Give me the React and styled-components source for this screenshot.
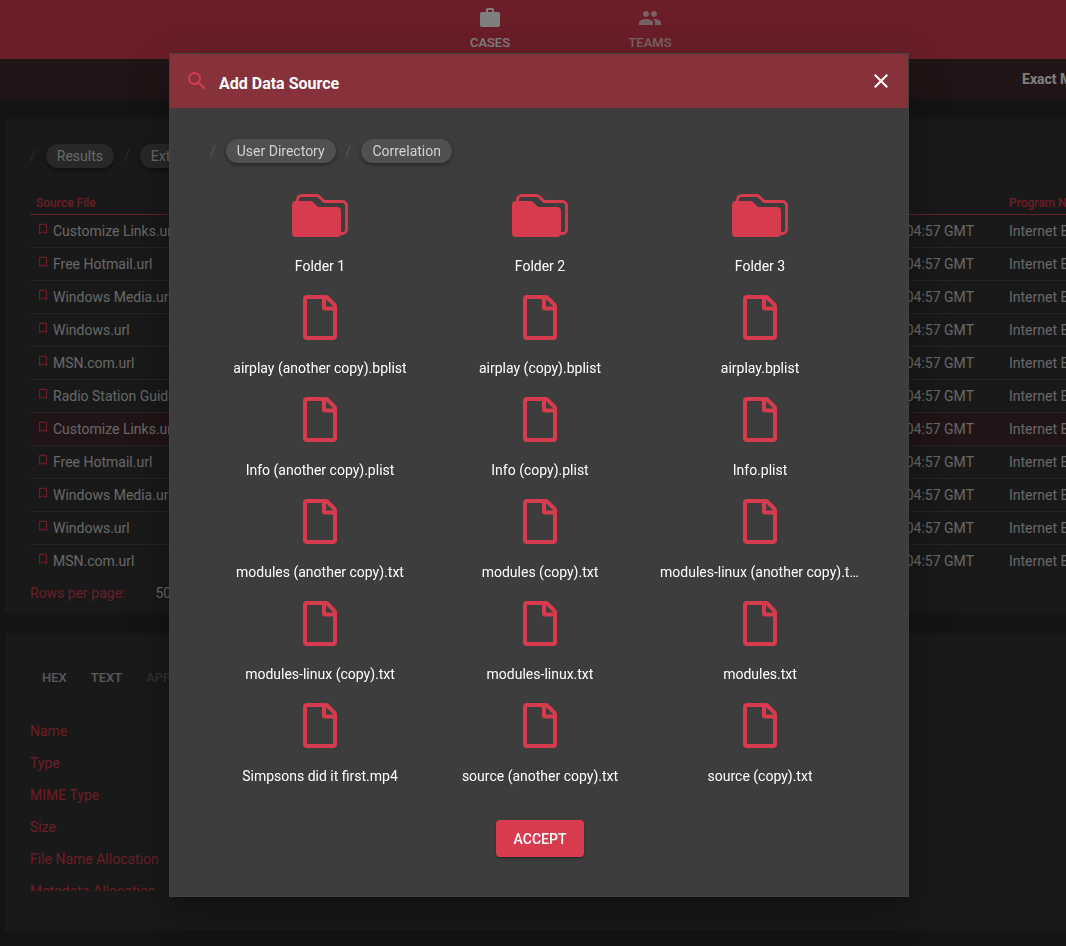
import React from 'react';
import styled, { createGlobalStyle } from 'styled-components';
import { MdWork, MdPeople, MdSearch, MdClose, MdBookmarkBorder } from 'react-icons/md';

const accent = '#d63c4e';

const GlobalStyle = createGlobalStyle`
  *, *::before, *::after { box-sizing: border-box; }
  body {
    margin: 0;
    background: #282828;
    color: #fff;
    font-family: Roboto, "Liberation Sans", sans-serif;
    font-size: 14px;
    line-height: 20px;
    overflow-x: hidden;
  }
  button { font: inherit; color: inherit; border: 0; background: none; padding: 0; cursor: pointer; }
  a { color: inherit; text-decoration: none; }
`;

const Page = styled.div`
  min-height: 100vh;
  overflow: hidden;
  padding-bottom: 15px;
`;

const NavBar = styled.nav`
  height: 59px;
  padding-left: 74px;
  display: flex;
  justify-content: center;
  background: ${accent};
`;

const NavTab = styled.a`
  width: 160px;
  padding-top: 6px;
  display: flex;
  flex-direction: column;
  align-items: center;
  gap: 5px;
  font-size: 13px;
  line-height: 16px;
  font-weight: 500;
  opacity: ${(p) => (p.$active ? 1 : 0.7)};
`;

const SubBar = styled.div`
  height: 40px;
  display: flex;
  align-items: center;
  justify-content: flex-end;
  background: #42282c;
`;

const MatchToggle = styled.button`
  width: 44px;
  display: flex;
  font-weight: 700;
  white-space: nowrap;
`;

const Panel = styled.section`
  margin: 20px 0 0 5px;
  padding: 0 0 ${(p) => p.$bottom}px 25px;
  overflow: hidden;
  background: #323232;
`;

const Crumbs = styled.nav`
  display: flex;
  align-items: center;
  gap: 10px;
  padding-top: ${(p) => p.$top}px;
  color: #5a5a5a;
`;

const Crumb = styled.a`
  padding: 2px 11px;
  border-radius: 12px;
  background: #505050;
  color: #d2d2d2;
  box-shadow: 0 2px 4px rgba(0, 0, 0, 0.4);
  white-space: nowrap;
`;

const Table = styled.table`
  margin-top: 22px;
  width: 1100px;
  table-layout: fixed;
  border-collapse: collapse;
  white-space: nowrap;
`;

const HeadCell = styled.th`
  width: ${(p) => p.$width};
  height: 24px;
  padding: 2px 6px 0;
  text-align: left;
  font-size: 12px;
  font-weight: 500;
  color: ${accent};
  border-bottom: 1px solid ${accent};
  &:last-child { padding-left: 29px; }
`;

const Row = styled.tr`
  height: 33px;
  background: ${(p) => (p.$selected ? '#42282c' : 'transparent')};
  border-bottom: 1px solid #4b4b4b;
  &:last-child { border-bottom: 0; }
`;

const Cell = styled.td`
  padding: 0 6px;
  color: #d0d0d0;
  text-align: ${(p) => p.$align || 'left'};
  &:last-child { padding-left: 29px; }
`;

const FileCell = styled.div`
  display: flex;
  align-items: center;
  gap: 3px;
  svg { fill: ${accent}; margin-bottom: 4px; }
`;

const Pager = styled.div`
  display: flex;
  align-items: center;
  gap: 30px;
  height: 32px;
  color: #d0d0d0;
`;

const PagerLabel = styled.span`
  color: ${accent};
`;

const DetailTabs = styled.div`
  display: flex;
  gap: 24px;
  padding: 35px 12px 27px;
`;

const DetailTab = styled.button`
  font-size: 13px;
  font-weight: 500;
  color: ${(p) => (p.disabled ? '#626262' : '#b4b4b4')};
`;

const FieldList = styled.ul`
  margin: 0;
  padding: 0;
  list-style: none;
  height: 176px;
  overflow: hidden;
  color: ${accent};
`;

const Field = styled.li`
  height: 32px;
  line-height: 32px;
`;

const Backdrop = styled.div`
  position: fixed;
  inset: 0;
  padding: 4px 0 0 12px;
  display: flex;
  align-items: center;
  justify-content: center;
  background: rgba(0, 0, 0, 0.5);
`;

const Dialog = styled.div`
  width: 740px;
  max-width: 100%;
  display: flex;
  flex-direction: column;
  background: #3d3d3d;
  border: 1px solid #424242;
  box-shadow: 0 11px 15px -7px rgba(0, 0, 0, 0.2), 0 24px 38px 3px rgba(0, 0, 0, 0.14),
    0 9px 46px 8px rgba(0, 0, 0, 0.12);
`;

const DialogHeader = styled.header`
  height: 54px;
  padding: 0 15px;
  display: flex;
  align-items: center;
  background: #87323a;
`;

const DialogTitle = styled.h2`
  flex: 1;
  margin: 6px 0 0 10px;
  font-size: 16px;
  font-weight: 700;
`;

const IconButton = styled.button`
  display: flex;
`;

const DialogBody = styled.div`
  padding: 0 38px 39px 40px;
`;

const Grid = styled.div`
  margin-top: 20px;
  display: grid;
  grid-template-columns: repeat(3, 1fr);
`;

const Item = styled.button`
  height: 102px;
  padding: 7px 10px 0;
  display: flex;
  flex-direction: column;
  align-items: center;
  gap: 14px;
  min-width: 0;
`;

const ItemLabel = styled.span`
  max-width: 100%;
  overflow: hidden;
  text-overflow: ellipsis;
  white-space: nowrap;
`;

const Actions = styled.div`
  margin-top: 25px;
  display: flex;
  justify-content: center;
`;

const AcceptButton = styled.button`
  height: 37px;
  padding: 0 18px;
  border-radius: 4px;
  background: ${accent};
  font-weight: 500;
  box-shadow: 0 3px 1px -2px rgba(0, 0, 0, 0.2), 0 2px 2px rgba(0, 0, 0, 0.14), 0 1px 5px rgba(0, 0, 0, 0.12);
`;

const FolderIcon = () => (
  <svg width="56" height="52" viewBox="0 0 56 52" aria-hidden="true">
    <path
      d="M5.500 12V9.500a4 4 0 0 1 4-4H25c1 0 1.600 .4 2.300 1.200L31.500 11c.4 .4 .8 .5 1.500 .5H50.500a4 4 0 0 1 4 4V39.500a4 4 0 0 1-4 4H47"
      fill="none"
      stroke={accent}
      strokeWidth="2.800"
    />
    <path
      d="M0 15a4 4 0 0 1 4-4H18c1.500 0 2.500 .4 3.500 1.400L25 16c.8 .8 1.400 1 2.500 1H45a4 4 0 0 1 4 4V43a4 4 0 0 1-4 4H4a4 4 0 0 1-4-4Z"
      fill={accent}
    />
  </svg>
);

const FileIcon = () => (
  <svg width="34" height="52" viewBox="0 0 34 52" aria-hidden="true">
    <g fill="none" stroke={accent} strokeWidth="4" strokeLinejoin="round">
      <path d="M4 5H22.500a3 3 0 0 1 2 .8L31.200 12.500a3 3 0 0 1 .8 2V44a2 2 0 0 1-2 2H4a2 2 0 0 1-2-2V7a2 2 0 0 1 2-2Z" />
      <path d="M21 5V15.500a1 1 0 0 0 1 1H32" />
    </g>
  </svg>
);

const files = [
  'Customize Links.url',
  'Free Hotmail.url',
  'Windows Media.url',
  'Windows.url',
  'MSN.com.url',
  'Radio Station Guide.url',
  'Customize Links.url',
  'Free Hotmail.url',
  'Windows Media.url',
  'Windows.url',
  'MSN.com.url',
];

const fields = ['Name', 'Type', 'MIME Type', 'Size', 'File Name Allocation', 'Metadata Allocation'];

const items = [
  'Folder 1',
  'Folder 2',
  'Folder 3',
  'airplay (another copy).bplist',
  'airplay (copy).bplist',
  'airplay.bplist',
  'Info (another copy).plist',
  'Info (copy).plist',
  'Info.plist',
  'modules (another copy).txt',
  'modules (copy).txt',
  'modules-linux (another copy).txt',
  'modules-linux (copy).txt',
  'modules-linux.txt',
  'modules.txt',
  'Simpsons did it first.mp4',
  'source (another copy).txt',
  'source (copy).txt',
];

function Trail({ names, top }) {
  return (
    <Crumbs $top={top} aria-label="Breadcrumb">
      {names.map((name) => (
        <React.Fragment key={name}>
          <span>/</span>
          <Crumb href="#">{name}</Crumb>
        </React.Fragment>
      ))}
    </Crumbs>
  );
}

export default function App() {
  return (
    <>
      <GlobalStyle />
      <Page>
        <NavBar>
          <NavTab href="#" $active><MdWork size={24} />CASES</NavTab>
          <NavTab href="#"><MdPeople size={24} />TEAMS</NavTab>
        </NavBar>
        <SubBar><MatchToggle>Exact Match</MatchToggle></SubBar>
        <Panel $bottom={4}>
          <Trail names={['Results', 'Extracted Content']} top={25} />
          <Table>
            <thead>
              <tr>
                <HeadCell $width="700px">Source File</HeadCell>
                <HeadCell $width="250px">Date Accessed</HeadCell>
                <HeadCell>Program Name</HeadCell>
              </tr>
            </thead>
            <tbody>
              {files.map((file, i) => (
                <Row key={i} $selected={i === 6}>
                  <Cell><FileCell><MdBookmarkBorder size={14} />{file}</FileCell></Cell>
                  <Cell $align="right">2008-10-20 21:04:57 GMT</Cell>
                  <Cell>Internet Explorer</Cell>
                </Row>
              ))}
            </tbody>
          </Table>
          <Pager><PagerLabel>Rows per page:</PagerLabel><span>50</span></Pager>
        </Panel>
        <Panel $bottom={40}>
          <DetailTabs>
            <DetailTab>HEX</DetailTab>
            <DetailTab>TEXT</DetailTab>
            <DetailTab disabled>APPLICATION</DetailTab>
          </DetailTabs>
          <FieldList>
            {fields.map((f) => <Field key={f}>{f}</Field>)}
          </FieldList>
        </Panel>
      </Page>
      <Backdrop>
        <Dialog role="dialog" aria-modal="true" aria-labelledby="dialog-title">
          <DialogHeader>
            <MdSearch size={24} color={accent} />
            <DialogTitle id="dialog-title">Add Data Source</DialogTitle>
            <IconButton aria-label="Close"><MdClose size={24} /></IconButton>
          </DialogHeader>
          <DialogBody>
            <Trail names={['User Directory', 'Correlation']} top={31} />
            <Grid>
              {items.map((name) => (
                <Item key={name}>
                  {name.startsWith('Folder') ? <FolderIcon /> : <FileIcon />}
                  <ItemLabel>{name}</ItemLabel>
                </Item>
              ))}
            </Grid>
            <Actions><AcceptButton>ACCEPT</AcceptButton></Actions>
          </DialogBody>
        </Dialog>
      </Backdrop>
    </>
  );
}
